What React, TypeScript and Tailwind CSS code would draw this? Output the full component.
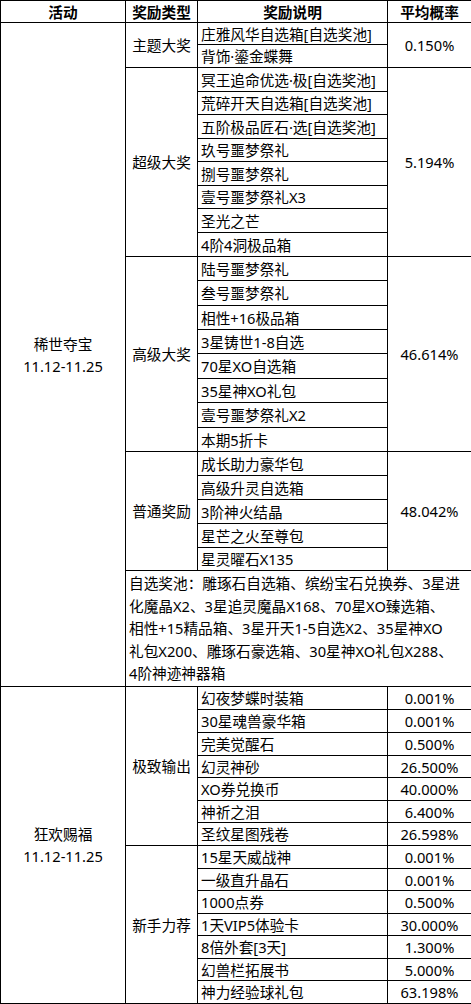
import React from "react";

interface RewardItem {
    name: string;
    rate?: string;
    h: number;
}

interface RewardGroup {
    type: string;
    rate?: string; // shared rate for the whole group
    items: RewardItem[];
}

interface Activity {
    name: string;
    date: string;
    groups: RewardGroup[];
    pool?: { h: number; lines: string[] };
}

const activities: Activity[] = [
    {
        name: "稀世夺宝",
        date: "11.12-11.25",
        groups: [
            {
                type: "主题大奖",
                rate: "0.150%",
                items: [
                    { name: "庄雅风华自选箱[自选奖池]", h: 22 },
                    { name: "背饰·鎏金蝶舞", h: 23 },
                ],
            },
            {
                type: "超级大奖",
                rate: "5.194%",
                items: [
                    { name: "冥王追命优选·极[自选奖池]", h: 24 },
                    { name: "荒碎开天自选箱[自选奖池]", h: 23 },
                    { name: "五阶极品匠石·选[自选奖池]", h: 24 },
                    { name: "玖号噩梦祭礼", h: 23 },
                    { name: "捌号噩梦祭礼", h: 24 },
                    { name: "壹号噩梦祭礼X3", h: 23 },
                    { name: "圣光之芒", h: 24 },
                    { name: "4阶4洞极品箱", h: 24 },
                ],
            },
            {
                type: "高级大奖",
                rate: "46.614%",
                items: [
                    { name: "陆号噩梦祭礼", h: 24 },
                    { name: "叁号噩梦祭礼", h: 25 },
                    { name: "相性+16极品箱", h: 24 },
                    { name: "3星铸世1-8自选", h: 24 },
                    { name: "70星XO自选箱", h: 25 },
                    { name: "35星神XO礼包", h: 24 },
                    { name: "壹号噩梦祭礼X2", h: 25 },
                    { name: "本期5折卡", h: 24 },
                ],
            },
            {
                type: "普通奖励",
                rate: "48.042%",
                items: [
                    { name: "成长助力豪华包", h: 24 },
                    { name: "高级升灵自选箱", h: 24 },
                    { name: "3阶神火结晶", h: 24 },
                    { name: "星芒之火至尊包", h: 24 },
                    { name: "星灵曜石X135", h: 23 },
                ],
            },
        ],
        pool: {
            h: 116,
            lines: [
                "自选奖池：雕琢石自选箱、缤纷宝石兑换券、3星进",
                "化魔晶X2、3星追灵魔晶X168、70星XO臻选箱、",
                "相性+15精品箱、3星开天1-5自选X2、35星神XO",
                "礼包X200、雕琢石豪选箱、30星神XO礼包X288、",
                "4阶神迹神器箱",
            ],
        },
    },
    {
        name: "狂欢赐福",
        date: "11.12-11.25",
        groups: [
            {
                type: "极致输出",
                items: [
                    { name: "幻夜梦蝶时装箱", rate: "0.001%", h: 23 },
                    { name: "30星魂兽豪华箱", rate: "0.001%", h: 23 },
                    { name: "完美觉醒石", rate: "0.500%", h: 23 },
                    { name: "幻灵神砂", rate: "26.500%", h: 22 },
                    { name: "XO券兑换币", rate: "40.000%", h: 23 },
                    { name: "神祈之泪", rate: "6.400%", h: 22 },
                    { name: "圣纹星图残卷", rate: "26.598%", h: 23 },
                ],
            },
            {
                type: "新手力荐",
                items: [
                    { name: "15星天威战神", rate: "0.001%", h: 23 },
                    { name: "一级直升晶石", rate: "0.001%", h: 22 },
                    { name: "1000点券", rate: "0.500%", h: 23 },
                    { name: "1天VIP5体验卡", rate: "30.000%", h: 22 },
                    { name: "8倍外套[3天]", rate: "1.300%", h: 23 },
                    { name: "幻兽栏拓展书", rate: "5.000%", h: 22 },
                    { name: "神力经验球礼包", rate: "63.198%", h: 23 },
                ],
            },
        ],
    },
];

// leading kept under the row height so short rows don't grow
const cell = "border border-black p-0 align-middle leading-[20px]";

function ActivityRows({ activity }: { activity: Activity }) {
    const span =
        activity.groups.reduce((n, g) => n + g.items.length, 0) + (activity.pool ? 1 : 0);

    const rows: React.ReactNode[] = [];
    activity.groups.forEach((group, gi) => {
        group.items.forEach((item, ii) => {
            rows.push(
                <tr key={`${gi}-${ii}`} style={{ height: item.h }}>
                    {gi === 0 && ii === 0 && (
                        <td rowSpan={span} className={`${cell} text-center`}>
                            <div className="leading-[22px]">{activity.name}</div>
                            <div className="leading-[22px]">{activity.date}</div>
                        </td>
                    )}
                    {ii === 0 && (
                        <td rowSpan={group.items.length} className={`${cell} text-center`}>
                            {group.type}
                        </td>
                    )}
                    <td className={`${cell} pl-[3px] text-left whitespace-nowrap`}>{item.name}</td>
                    {group.rate ? (
                        ii === 0 && (
                            <td rowSpan={group.items.length} className={`${cell} text-center`}>
                                {group.rate}
                            </td>
                        )
                    ) : (
                        <td className={`${cell} text-center`}>{item.rate}</td>
                    )}
                </tr>
            );
        });
    });

    if (activity.pool) {
        rows.push(
            <tr key="pool" style={{ height: activity.pool.h }}>
                <td colSpan={3} className={`${cell} pl-[3px] text-left`}>
                    {activity.pool.lines.map((line) => (
                        <div key={line} className="whitespace-nowrap leading-[22.5px]">
                            {line}
                        </div>
                    ))}
                </td>
            </tr>
        );
    }

    return <>{rows}</>;
}

export default function App() {
    return (
        <div className="min-h-screen w-[471px] bg-white text-black font-['Noto_Sans','Noto_Sans_CJK_SC',sans-serif] text-[14.67px]">
            <table className="w-[471px] table-fixed border-collapse">
                <colgroup>
                    <col className="w-[125px]" />
                    <col className="w-[72px]" />
                    <col className="w-[190px]" />
                    <col className="w-[84px]" />
                </colgroup>
                <thead>
                    <tr className="h-[22px]">
                        {["活动", "奖励类型", "奖励说明", "平均概率"].map((t) => (
                            <th key={t} className={`${cell} text-center font-bold`}>
                                {t}
                            </th>
                        ))}
                    </tr>
                </thead>
                <tbody>
                    {activities.map((a) => (
                        <ActivityRows key={a.name} activity={a} />
                    ))}
                </tbody>
            </table>
        </div>
    );
}
